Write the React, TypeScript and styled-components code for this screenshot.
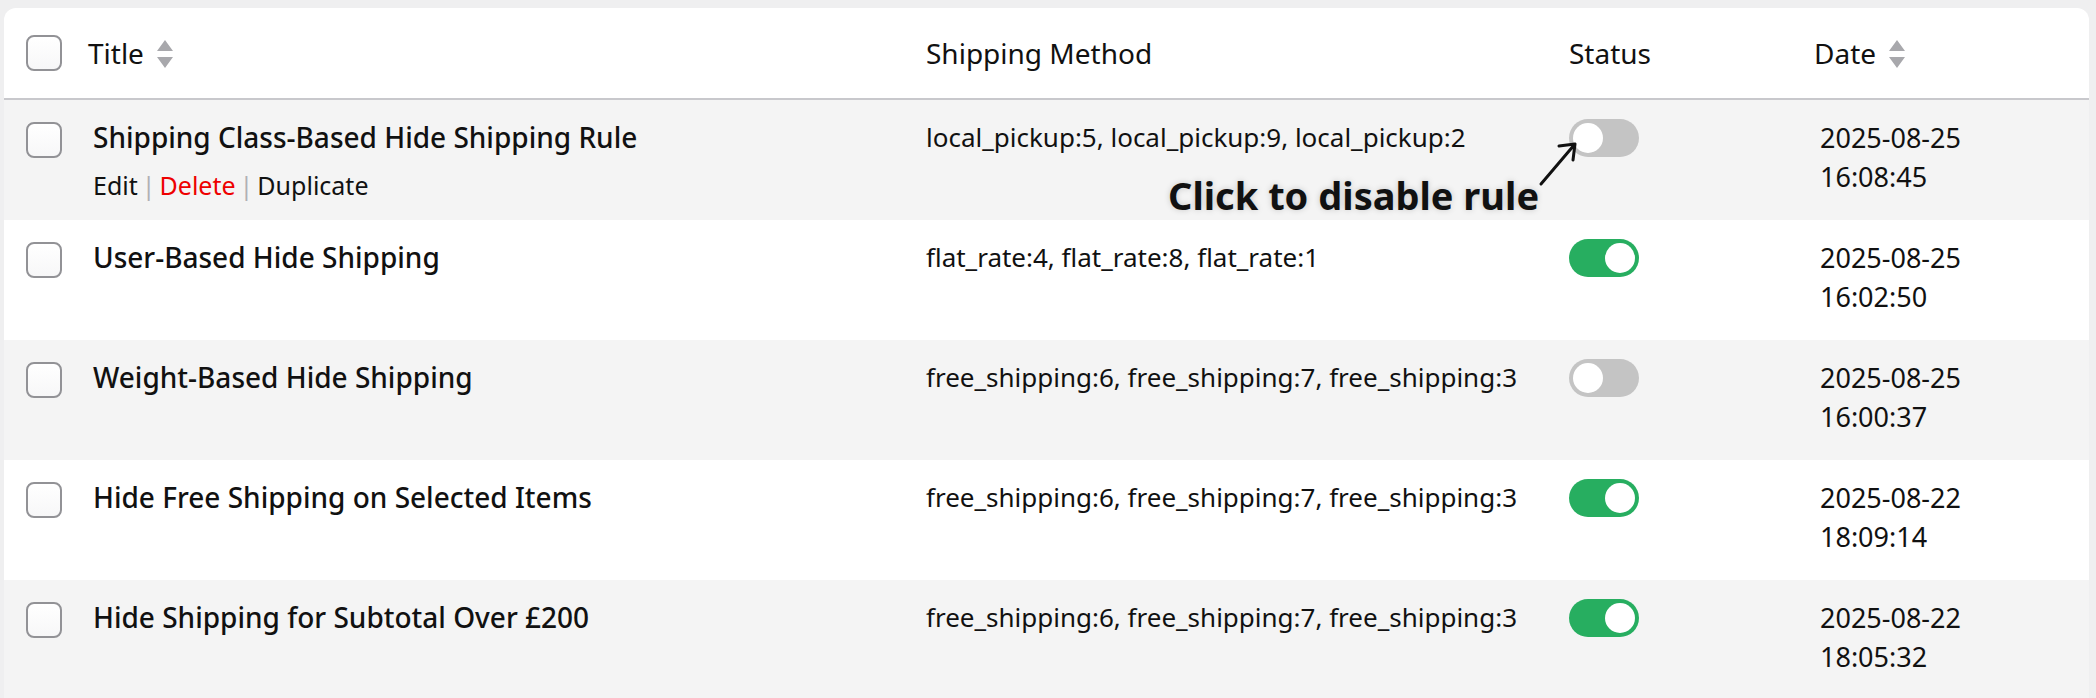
import styled, { createGlobalStyle } from 'styled-components'

const Global = createGlobalStyle`
  html, body { margin: 0; padding: 0; background: #efeff0; }
  body {
    font-family: "Noto Sans", "Liberation Sans", sans-serif;
    color: #111;
    -webkit-font-smoothing: antialiased;
  }
`

type Rule = {
  id: number
  title: string
  methods: string
  enabled: boolean
  date: string
  time: string
}

const rules: Rule[] = [
  {
    id: 1,
    title: 'Shipping Class-Based Hide Shipping Rule',
    methods: 'local_pickup:5, local_pickup:9, local_pickup:2',
    enabled: false,
    date: '2025-08-25',
    time: '16:08:45',
  },
  {
    id: 2,
    title: 'User-Based Hide Shipping',
    methods: 'flat_rate:4, flat_rate:8, flat_rate:1',
    enabled: true,
    date: '2025-08-25',
    time: '16:02:50',
  },
  {
    id: 3,
    title: 'Weight-Based Hide Shipping',
    methods: 'free_shipping:6, free_shipping:7, free_shipping:3',
    enabled: false,
    date: '2025-08-25',
    time: '16:00:37',
  },
  {
    id: 4,
    title: 'Hide Free Shipping on Selected Items',
    methods: 'free_shipping:6, free_shipping:7, free_shipping:3',
    enabled: true,
    date: '2025-08-22',
    time: '18:09:14',
  },
  {
    id: 5,
    title: 'Hide Shipping for Subtotal Over £200',
    methods: 'free_shipping:6, free_shipping:7, free_shipping:3',
    enabled: true,
    date: '2025-08-22',
    time: '18:05:32',
  },
]

export default function App() {
  return (
    <>
      <Global />
      <Card>
        <HeadRow>
          <CheckCell>
            <Checkbox />
          </CheckCell>
          <HeadCell>
            Title <SortIcon />
          </HeadCell>
          <HeadCell>Shipping Method</HeadCell>
          <HeadCell>Status</HeadCell>
          <HeadCell>
            Date <SortIcon />
          </HeadCell>
        </HeadRow>
        {rules.map((rule, i) => (
          <BodyRow key={rule.id} $striped={i % 2 === 0}>
            <CheckCell $top>
              <Checkbox />
            </CheckCell>
            <TitleCell>
              <RuleTitle>{rule.title}</RuleTitle>
              {i === 0 && (
                <Actions>
                  <span>Edit</span>
                  <Sep>|</Sep>
                  <DeleteLink>Delete</DeleteLink>
                  <Sep>|</Sep>
                  <span>Duplicate</span>
                </Actions>
              )}
            </TitleCell>
            <MethodCell>{rule.methods}</MethodCell>
            <StatusCell>
              <Toggle $on={rule.enabled} />
            </StatusCell>
            <DateCell>
              {rule.date}
              <br />
              {rule.time}
            </DateCell>
            {i === 0 && (
              <>
                <Callout>Click to disable rule</Callout>
                <CalloutArrow width="52" height="56" viewBox="0 0 52 56">
                  <path
                    d="M11 47 L45 7 M29 9 L45 7 L43 23"
                    fill="none"
                    stroke="#111"
                    strokeWidth="3"
                    strokeLinecap="round"
                    strokeLinejoin="round"
                  />
                </CalloutArrow>
              </>
            )}
          </BodyRow>
        ))}
      </Card>
    </>
  )
}

function SortIcon() {
  return (
    <SortSvg width="16" height="28" viewBox="0 0 16 28">
      <path d="M8 0 L16 11 L0 11 Z M0 17 L16 17 L8 28 Z" fill="#a8a8ac" />
    </SortSvg>
  )
}

const Card = styled.div`
  margin: 8px 7px 0 4px;
  background: #fff;
  border-radius: 12px 12px 0 0;
  overflow: hidden;
`

const columns = '84px 838px 643px 245px 1fr'

const HeadRow = styled.div`
  display: grid;
  grid-template-columns: ${columns};
  align-items: center;
  height: 90px;
  border-bottom: 2px solid #c8c8cc;
`

const HeadCell = styled.div`
  display: flex;
  align-items: center;
  gap: 13px;
  font-size: 28px;
  color: #111;
`

const SortSvg = styled.svg`
  display: block;
  margin-top: 2px;
`

const BodyRow = styled.div<{ $striped: boolean }>`
  position: relative;
  display: grid;
  grid-template-columns: ${columns};
  align-items: start;
  min-height: 120px;
  background: ${(p) => (p.$striped ? '#f4f4f4' : '#fff')};
`

const CheckCell = styled.div<{ $top?: boolean }>`
  padding-left: 22px;
  padding-top: ${(p) => (p.$top ? '22px' : '0')};
`

const Checkbox = styled.span`
  display: block;
  box-sizing: border-box;
  width: 36px;
  height: 36px;
  border: 2px solid #929296;
  border-radius: 8px;
  background: linear-gradient(#fff, #f7f7f8);
`

const TitleCell = styled.div`
  padding: 18px 0 0 5px;
`

const RuleTitle = styled.div`
  font-size: 28px;
  font-weight: 500;
  line-height: 38px;
  color: #111;
`

const Actions = styled.div`
  margin-top: 10px;
  font-size: 25px;
  line-height: 38px;
  color: #111;
`

const Sep = styled.span`
  color: #b0b0b4;
  margin: 0 4px;
`

const DeleteLink = styled.span`
  color: #ee0000;
`

const MethodCell = styled.div`
  padding-top: 18px;
  font-size: 26px;
  line-height: 38px;
  color: #111;
`

const StatusCell = styled.div`
  padding-top: 19px;
`

const Toggle = styled.span<{ $on: boolean }>`
  position: relative;
  display: block;
  width: 70px;
  height: 38px;
  border-radius: 19px;
  background: ${(p) => (p.$on ? '#27ae60' : '#c4c4c4')};
  &::after {
    content: '';
    position: absolute;
    top: 4px;
    left: ${(p) => (p.$on ? '36px' : '4px')};
    width: 30px;
    height: 30px;
    border-radius: 50%;
    background: #fff;
  }
`

const DateCell = styled.div`
  padding: 18px 0 0 6px;
  font-size: 27px;
  line-height: 39px;
  color: #111;
`

const Callout = styled.div`
  position: absolute;
  left: 1164px;
  top: 76px;
  font-size: 38px;
  font-weight: 700;
  line-height: 38px;
  color: #111;
  white-space: nowrap;
  text-shadow: 0 0 6px rgba(0, 0, 0, 0.18);
`

const CalloutArrow = styled.svg`
  position: absolute;
  left: 1526px;
  top: 37px;
`
